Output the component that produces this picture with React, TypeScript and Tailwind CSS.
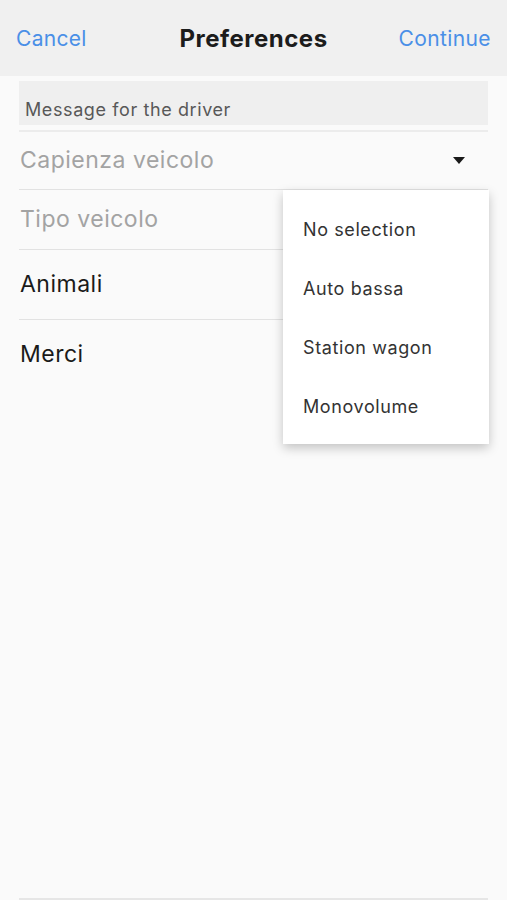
const options = ['No selection', 'Auto bassa', 'Station wagon', 'Monovolume']

function Caret() {
  return (
    <svg width="12" height="7" viewBox="0 0 12 7" aria-hidden="true">
      <path d="M0 0h12L6 7z" fill="#1a1a1a" />
    </svg>
  )
}

export default function App() {
  return (
    <div
      className="relative flex min-h-[900px] w-full flex-col bg-[#fafafa]"
      style={{ fontFamily: 'Inter, "Noto Sans", sans-serif' }}
    >
      <header className="grid h-[76px] grid-cols-[1fr_auto_1fr] items-center bg-[#f0f0f0] px-[16px] pt-px">
        <span className="text-[21px] tracking-[0.3px] text-[#4a8fe7]">Cancel</span>
        <h1 className="text-[24px] font-bold tracking-[0.5px] text-[#1c1c1c]">Preferences</h1>
        <span className="justify-self-end text-[21px] tracking-[0.4px] text-[#4a8fe7]">Continue</span>
      </header>

      <main className="flex flex-1 flex-col px-[19px]">
        <div className="mt-[5px] flex h-[44px] items-end bg-[#efefef] px-[6px] pb-[4px]">
          <span className="text-[18px] leading-[22px] tracking-[0.6px] text-[#585858]">Message for the driver</span>
        </div>
        <div className="mt-[5px] h-[2px] bg-[#ececec]" />

        <div className="flex h-[58px] items-center justify-between border-b border-[#e2e2e2] pl-px pr-[23px]">
          <span className="text-[23px] tracking-[0.5px] text-[#a3a3a3]">Capienza veicolo</span>
          <Caret />
        </div>
        <div className="flex h-[60px] items-center border-b border-[#e2e2e2] pl-px">
          <span className="text-[23px] tracking-[0.5px] text-[#a3a3a3]">Tipo veicolo</span>
        </div>
        <div className="flex h-[70px] items-center border-b border-[#e2e2e2] pl-px">
          <span className="text-[23px] tracking-[0.5px] text-[#1a1a1a]">Animali</span>
        </div>
        <div className="flex h-[69px] items-center pl-px">
          <span className="text-[23px] tracking-[0.5px] text-[#1a1a1a]">Merci</span>
        </div>

        <div className="mt-auto h-[2px] bg-[#e6e6e6]" />
      </main>

      <ul className="absolute left-[283px] top-[190px] w-[206px] bg-white pb-[8px] pt-[10px] shadow-[0_4px_10px_rgba(0,0,0,0.22)]">
        {options.map((option) => (
          <li key={option} className="flex h-[59px] items-center px-[20px] text-[18px] tracking-[0.6px] text-[#333]">
            {option}
          </li>
        ))}
      </ul>
    </div>
  )
}
